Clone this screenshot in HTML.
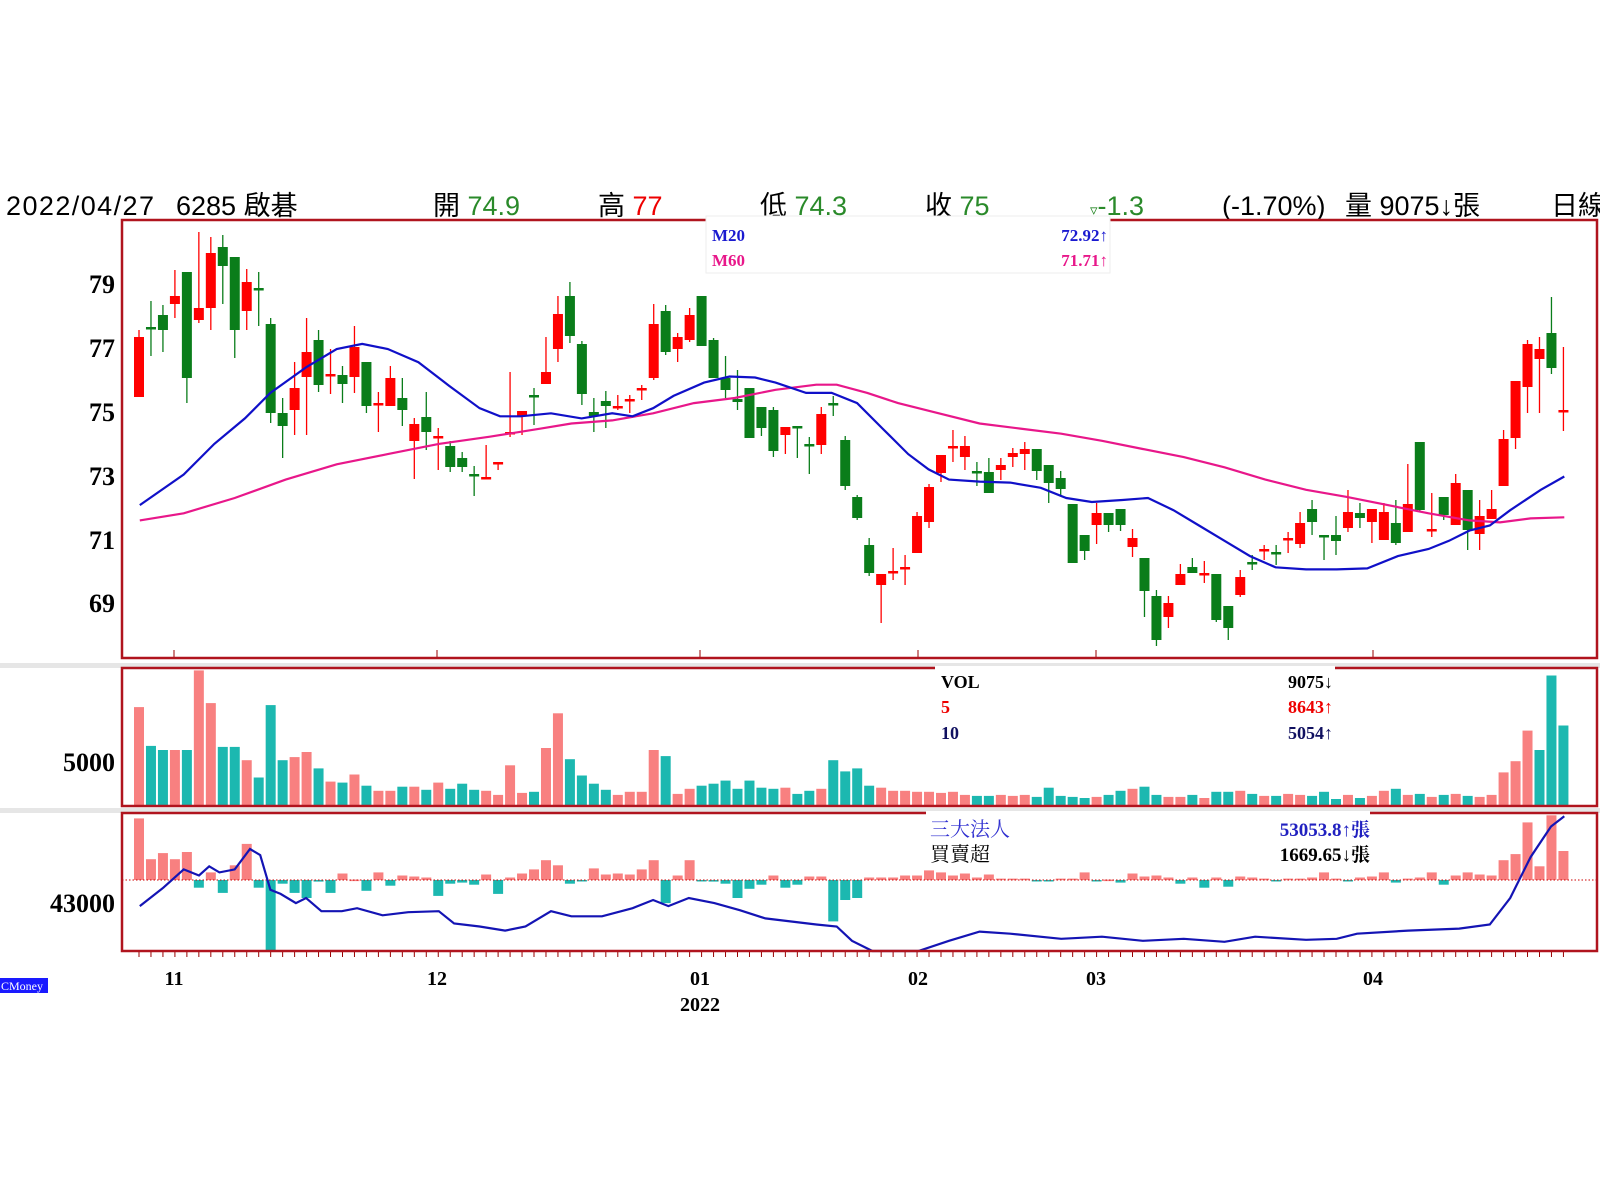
<!DOCTYPE html>
<html><head><meta charset="utf-8"><style>
html,body{margin:0;padding:0;background:#fff;width:1600px;height:1200px;overflow:hidden}
svg{display:block}
.h{font-family:"Liberation Sans","Noto Sans CJK TC",sans-serif;font-size:27px}
.s{font-family:"Liberation Serif","Noto Serif CJK SC",serif;font-weight:bold}
</style></head><body>
<svg id="c" width="1600" height="1200" xmlns="http://www.w3.org/2000/svg">
<rect x="0" y="663" width="1600" height="5" fill="#e6e6e6"/>
<rect x="0" y="808" width="1600" height="5" fill="#e6e6e6"/>
<g class="h">
<text x="6" y="215" textLength="148">2022/04/27</text>
<text x="176" y="215">6285 啟碁</text>
<text x="433" y="215">開 <tspan fill="#2a8a2a">74.9</tspan></text>
<text x="598" y="215">高 <tspan fill="#e00">77</tspan></text>
<text x="760" y="215">低 <tspan fill="#2a8a2a">74.3</tspan></text>
<text x="925" y="215">收 <tspan fill="#2a8a2a">75</tspan></text>
<text x="1090" y="215" fill="#2a8a2a"><tspan font-size="15">▿</tspan>-1.3</text>
<text x="1222" y="215">(-1.70%)</text>
<text x="1345" y="215">量 9075↓張</text>
<text x="1551" y="215">日線</text>
</g>
<g id="g"></g>
<g class="s" font-size="26" text-anchor="end">
<text x="115" y="293">79</text><text x="115" y="357">77</text><text x="115" y="421">75</text>
<text x="115" y="485">73</text><text x="115" y="549">71</text><text x="115" y="612">69</text>
<text x="115" y="771">5000</text><text x="115" y="912">43000</text>
</g>
<g class="s" font-size="20" text-anchor="middle">
<text x="174" y="985">11</text><text x="437" y="985">12</text><text x="700" y="985">01</text>
<text x="700" y="1011">2022</text><text x="918" y="985">02</text><text x="1096" y="985">03</text><text x="1373" y="985">04</text>
</g>
<rect x="0" y="978" width="48" height="15" fill="#1a1aff"/>
<text x="1" y="990" fill="#fff" font-family="Liberation Serif,serif" font-size="12">CMoney</text>
</svg>
<script>
var C=[[337,397,330,397,'r'],[327,329,301,356,'g'],[315,330,305,352,'g'],[296,304,270,318,'r'],[272,378,272,403,'g'],[308,320,232,323,'r'],[253,308,237,330,'r'],[247,266,235,304,'g'],[257,330,257,358,'g'],[282,311,269,330,'r'],[288,290,272,326,'g'],[324,413,318,423,'g'],[413,426,398,458,'g'],[388,410,362,435,'r'],[352,377,318,435,'r'],[340,385,330,392,'g'],[374,376,349,394,'r'],[375,384,366,403,'g'],[347,377,326,393,'r'],[362,406,362,413,'g'],[403,405,392,432,'r'],[378,406,366,406,'r'],[398,410,378,426,'g'],[424,441,418,479,'r'],[417,432,392,450,'g'],[436,438,428,470,'r'],[446,467,441,472,'g'],[458,467,452,472,'g'],[474,476,466,496,'g'],[477,478,445,479,'r'],[462,463,462,470,'r'],
[432,434,372,437,'r'],[411,416,411,435,'r'],[395,397,388,425,'g'],[372,384,337,384,'r'],[314,349,296,362,'r'],[296,336,282,343,'g'],[344,394,341,405,'g'],[412,416,398,432,'g'],[401,406,391,428,'g'],[406,408,395,410,'r'],[399,401,395,413,'r'],[388,390,385,400,'r'],[324,378,304,380,'r'],[311,352,305,355,'g'],[337,349,333,362,'r'],[315,340,308,342,'r'],[296,346,296,346,'g'],[340,378,338,378,'g'],[378,390,356,398,'g'],[399,402,370,410,'g'],[388,438,388,438,'g'],[407,428,407,436,'g'],[410,451,407,457,'g'],[427,435,427,454,'r'],[426,428,427,458,'g'],[444,446,437,474,'g'],[414,445,407,454,'r'],[403,405,396,416,'g'],[440,486,436,490,'g'],[497,518,495,520,'g'],[545,573,538,576,'g'],
[574,585,574,623,'r'],[571,573,548,580,'r'],[567,569,555,585,'r'],[516,553,512,553,'r'],[487,522,484,528,'r'],[455,473,455,482,'r'],[446,448,430,462,'r'],[446,457,436,470,'r'],[471,473,462,486,'g'],[472,493,458,493,'g'],[465,470,458,480,'r'],[453,457,448,467,'r'],[449,454,442,470,'r'],[449,471,449,480,'g'],[465,483,465,503,'g'],[478,489,471,496,'g'],[504,563,504,563,'g'],[535,551,535,560,'g'],[513,525,503,544,'r'],[513,525,513,532,'g'],[509,525,509,531,'g'],[538,547,529,557,'r'],[558,591,558,617,'g'],[596,640,590,646,'g'],[603,617,596,628,'r'],[574,585,564,585,'r'],[567,573,558,573,'g'],[573,575,561,583,'r'],[574,620,574,622,'g'],[606,628,606,640,'g'],[577,595,570,597,'r'],[562,564,555,570,'g'],[549,551,545,560,'r'],
[552,554,545,565,'g'],[538,540,532,553,'r'],[523,544,512,548,'r'],[509,522,500,535,'g'],[535,537,535,560,'g'],[535,541,516,555,'g'],[512,528,490,532,'r'],[513,518,503,528,'g'],[509,522,509,543,'r'],[512,540,503,540,'r'],[523,543,500,545,'g'],[504,532,464,532,'r'],[442,510,442,512,'g'],[529,531,493,537,'r'],[497,515,497,520,'g'],[483,525,474,525,'r'],[490,530,490,550,'g'],[516,534,500,550,'r'],[509,519,490,519,'r'],[439,486,430,486,'r'],[381,438,381,449,'r'],[344,387,340,413,'r'],[349,359,337,413,'r'],[333,368,297,374,'g'],[410,412,347,431,'r']];
var V=[693,731,735,735,735,657,689,732,732,745,762,691,745,742,737,753,766,767,759,770,775,775,771,771,774,767,773,768,774,775,779,750,777,776,733,699,744,760,768,774,779,776,776,735,741,778,773,770,768,765,773,765,772,773,772,778,775,773,745,756,753,770,772,775,775,776,776,777,776,779,780,780,779,780,779,781,772,780,781,782,781,779,775,773,771,779,781,781,779,782,776,776,775,778,780,780,778,779,780,776,783,779,782,780,775,773,779,778,781,779,778,780,781,779,757,746,716,735,662,711];
var VC={114:'r',115:'r',116:'r',117:'g',118:'g',119:'g'};
var I=[802,842,836,842,835,870,855,875,848,827,870,932,866,875,880,864,875,856,862,873,855,868,858,859,860,878,866,865,867,857,876,860,856,852,843,848,866,863,851,857,856,857,852,843,885,858,843,863,864,866,880,871,867,858,870,867,859,859,903,882,880,860,860,860,858,858,853,855,858,856,860,857,861,861,861,863,863,861,861,855,863,862,865,856,859,858,860,866,860,870,860,869,859,860,861,863,861,861,860,855,861,863,860,859,855,865,861,860,855,867,858,855,857,858,843,837,806,849,799,834];
var M20=[[137,495],[180,465],[210,435],[240,410],[265,385],[300,360],[330,342],[355,337],[380,342],[410,355],[440,378],[470,400],[490,408],[510,408],[540,405],[570,410],[600,405],[620,408],[640,400],[660,388],[690,375],[715,369],[740,370],[760,375],[790,385],[815,385],[840,395],[865,420],[890,445],[910,460],[930,470],[960,472],[990,473],[1020,478],[1045,488],[1070,492],[1100,490],[1125,488],[1150,500],[1175,515],[1200,530],[1225,545],[1250,556],[1280,558],[1310,558],[1340,557],[1370,545],[1400,538],[1420,530],[1440,520],[1460,515],[1480,500],[1510,480],[1533,467]];
var M60=[[137,510],[180,503],[230,488],[280,470],[330,455],[380,445],[430,435],[480,428],[530,420],[560,415],[600,412],[640,405],[680,395],[720,390],[760,382],[800,377],[820,377],[850,385],[880,395],[920,405],[960,415],[1000,420],[1040,425],[1080,432],[1120,440],[1160,448],[1200,458],[1240,470],[1280,480],[1320,487],[1360,495],[1400,503],[1440,510],[1470,512],[1500,508],[1533,507]];
var IL=[[137,888],[160,870],[180,852],[195,858],[205,849],[215,855],[230,852],[245,832],[255,838],[265,872],[275,876],[290,885],[300,880],[315,893],[335,893],[350,890],[375,897],[400,894],[430,893],[445,905],[470,908],[495,912],[515,908],[540,893],[560,898],[590,898],[620,890],[640,882],[655,888],[675,880],[700,885],[725,892],[750,900],[800,906],[820,908],[835,922],[855,932],[900,932],[930,922],[960,913],[990,915],[1040,920],[1080,918],[1120,922],[1160,920],[1200,923],[1230,918],[1280,921],[1310,920],[1330,915],[1380,912],[1430,910],[1460,906],[1480,880],[1500,840],[1520,810],[1533,800]];
var k=1.0204,s='';
function X(i){return 139+i*11.97}
function pl(a,c,w){return '<polyline fill="none" stroke="'+c+'" stroke-width="'+w+'" points="'+a.map(function(p){return (p[0]*k).toFixed(1)+','+(p[1]*k).toFixed(1)}).join(' ')+'"/>'}
C.forEach(function(d,i){var x=X(i),col=d[4]=='r'?'#f00':'#0a7d1a';
s+='<line x1="'+x+'" x2="'+x+'" y1="'+d[2]+'" y2="'+d[3]+'" stroke="'+col+'" stroke-width="1.3"/>';
var h=Math.max(d[1]-d[0],2.5);s+='<rect x="'+(x-5)+'" y="'+d[0]+'" width="10" height="'+h+'" fill="'+col+'"/>';});
s+=pl(M60,'#e8178a',2.2)+pl(M20,'#1010c8',2.2);
var vb=806;V.forEach(function(v,i){var y=v*k,c=VC[i]||C[i][4],col=c=='r'?'#f88080':'#1cb8b0';s+='<rect x="'+(X(i)-5)+'" y="'+y.toFixed(1)+'" width="10" height="'+(vb-y).toFixed(1)+'" fill="'+col+'"/>';});
var ib=880;I.slice(0,120).forEach(function(v,i){var y=v*k;var pos=y<ib;var col=pos?'#f88080':'#1cb8b0';var t=pos?y:ib,h=Math.abs(ib-y);if(y>950)h=950-ib;s+='<rect x="'+(X(i)-5)+'" y="'+t.toFixed(1)+'" width="10" height="'+Math.max(h,1.5).toFixed(1)+'" fill="'+col+'"/>';});
s+='<line x1="122" x2="1597" y1="880" y2="880" stroke="#c00" stroke-width="1" stroke-dasharray="1.5,2"/>';
s+=pl(IL,'#1414b4',2.2);
for(var i=0;i<120;i++){s+='<line x1="'+X(i)+'" x2="'+X(i)+'" y1="951" y2="957" stroke="#900" stroke-width="1"/>';}
[174,437,700,918,1096,1373].forEach(function(x){s+='<line x1="'+x+'" x2="'+x+'" y1="650" y2="658" stroke="#900"/>';});
var F='#b0141e';
s+='<rect x="122" y="220" width="1475" height="438" fill="none" stroke="'+F+'" stroke-width="2.5"/>';
s+='<rect x="122" y="668" width="1475" height="138" fill="none" stroke="'+F+'" stroke-width="2.5"/>';
s+='<rect x="122" y="813" width="1475" height="138" fill="none" stroke="'+F+'" stroke-width="2.5"/>';
var sf='font-family="Liberation Serif,Noto Serif CJK SC,serif" font-weight="bold"';
s+='<rect x="706" y="216" width="404" height="57" fill="#fff" stroke="#eee"/>';
s+='<text x="712" y="241" '+sf+' font-size="17" fill="#1a1ad0">M20</text><text x="1108" y="241" text-anchor="end" '+sf+' font-size="17" fill="#1a1ad0">72.92↑</text>';
s+='<text x="712" y="266" '+sf+' font-size="17" fill="#e8178a">M60</text><text x="1108" y="266" text-anchor="end" '+sf+' font-size="17" fill="#e8178a">71.71↑</text>';
s+='<rect x="935" y="666" width="400" height="78" fill="#fff"/>';
s+='<text x="941" y="688" '+sf+' font-size="18">VOL</text><text x="1333" y="688" text-anchor="end" '+sf+' font-size="18">9075↓</text>';
s+='<text x="941" y="713" '+sf+' font-size="18" fill="#e00">5</text><text x="1333" y="713" text-anchor="end" '+sf+' font-size="18" fill="#e00">8643↑</text>';
s+='<text x="941" y="739" '+sf+' font-size="18" fill="#101060">10</text><text x="1333" y="739" text-anchor="end" '+sf+' font-size="18" fill="#101060">5054↑</text>';
s+='<rect x="926" y="811" width="444" height="56" fill="#fff"/>';
s+='<text x="930" y="836" font-family="Liberation Serif,Noto Serif CJK TC,serif" font-size="20" fill="#3030d0">三大法人</text><text x="1370" y="836" text-anchor="end" '+sf+' font-size="19" fill="#2020c0">53053.8↑張</text>';
s+='<text x="930" y="861" font-family="Liberation Serif,Noto Serif CJK TC,serif" font-size="20">買賣超</text><text x="1370" y="861" text-anchor="end" '+sf+' font-size="19">1669.65↓張</text>';
document.getElementById('g').innerHTML=s;
</script>
</body></html>
